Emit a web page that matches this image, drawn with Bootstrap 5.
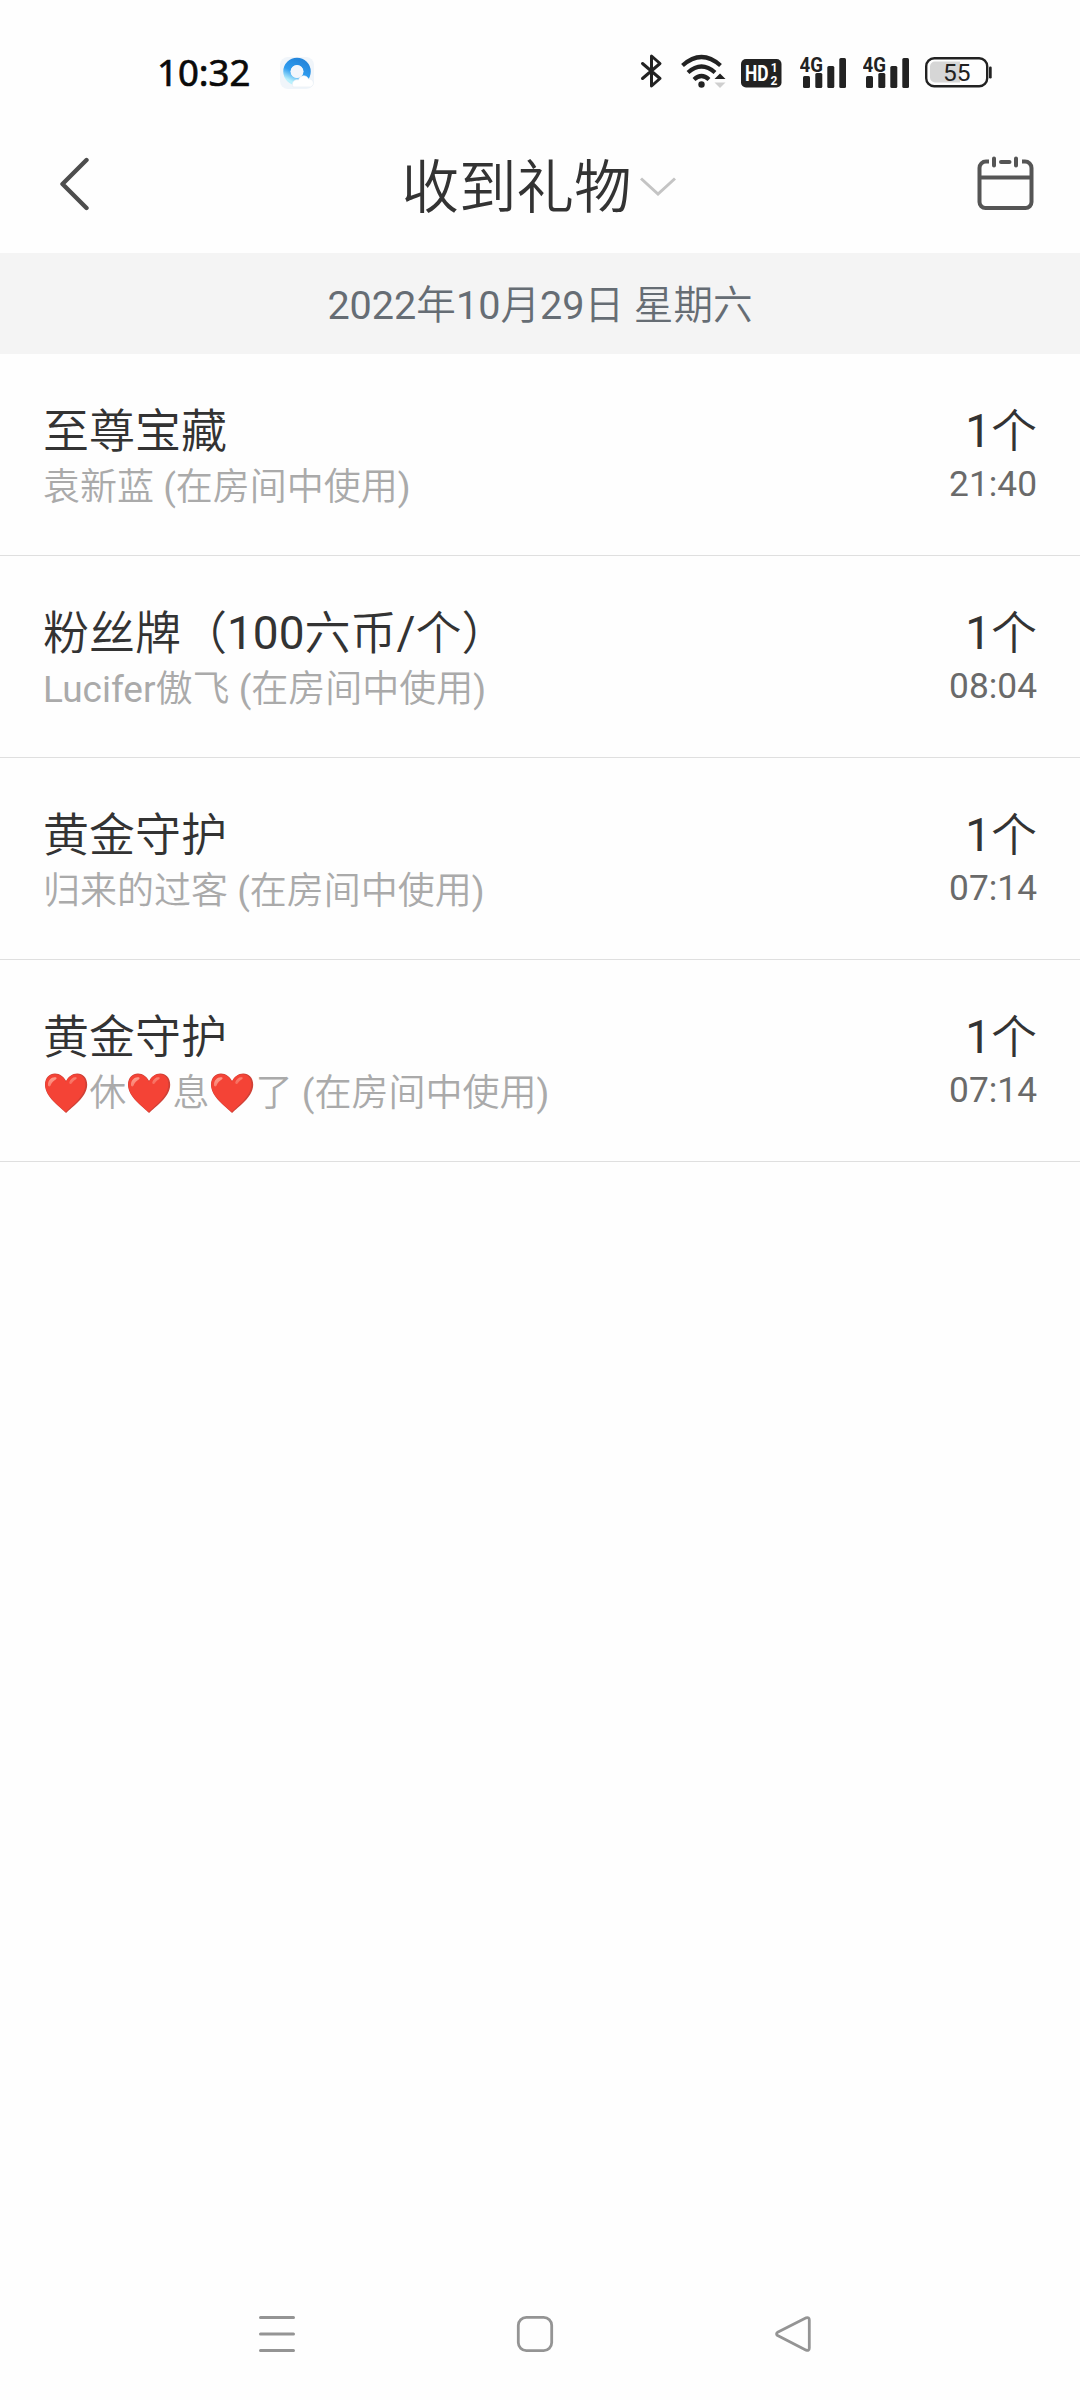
<!DOCTYPE html>
<html lang="zh-CN">
<head>
<meta charset="utf-8">
<meta name="viewport" content="width=device-width, initial-scale=1">
<title>收到礼物</title>
<link href="https://cdn.jsdelivr.net/npm/bootstrap@5.3.0/dist/css/bootstrap.min.css" rel="stylesheet">
<style>
  body{font-family:Roboto,"Noto Sans CJK SC DemiLight","Noto Sans CJK SC",sans-serif;color:#333;background:#fefefe}
  svg{display:block;flex:none}
  .phone{width:1080px;height:2400px;background:#fefefe}
  .status-bar{height:118px;padding:40px 87px 0 157px}
  .status-bar>div{height:64px}
  .status-icons{padding-bottom:2px}
  .clock{font:400 36.500px/64px "Noto Sans",sans-serif;color:#0a0a0a;-webkit-text-stroke:.7px #0a0a0a;width:122px;white-space:nowrap}
  .title-bar{height:135px;padding:0 45px 0 58px}
  .title-bar>svg{margin-bottom:2px}
  .page-title{font-size:57.500px;line-height:70px;font-weight:400;margin:6px 0 0}
  .date-band{height:101px;background:#f4f4f4;color:#666d74;font-size:39.600px;line-height:106px}
  .list-group>.gift{height:202px;padding:50px 43px 0;border:0;border-bottom:1px solid #dfdfdf;border-radius:0;background:#fefefe;color:#333}
  .gift-name{font-size:46px;line-height:54px;white-space:nowrap}
  .gift-from{font-size:37px;line-height:44px;margin-top:8px;color:#aaa;white-space:nowrap}
  .gift-time{font-size:35.300px;line-height:44px;margin-top:4px;color:#6a6a6a}
  .heart{display:inline-block;width:46.2px;height:40px;vertical-align:-7px}
  .nav-keys{height:132px;padding:0 267px 0 257px}
</style>
<script src="https://cdn.jsdelivr.net/npm/bootstrap@5.3.0/dist/js/bootstrap.bundle.min.js"></script>
</head>
<body>
<svg width="0" height="0" class="position-absolute" aria-hidden="true">
  <defs>
    <linearGradient id="heartShine" x1="0" y1="0" x2="1" y2="1"><stop offset="0" stop-color="#ffa494"/><stop offset="1" stop-color="#f4584a"/></linearGradient>
    <linearGradient id="ring" x1=".7" y1="0" x2=".25" y2="1"><stop offset="0" stop-color="#2587dc"/><stop offset=".55" stop-color="#2f9df0"/><stop offset="1" stop-color="#b9f0fc"/></linearGradient>
    <symbol id="heart" viewBox="0 0 46.4 40">
      <path d="M23.2 43C18 37 2 26 2 12.500 2 5 6.500 .5 12 .5c5 0 9 3.500 11.200 8C25.400 4 29.400 .5 34.400 .5 40 .5 44.400 5 44.400 12.500c0 13.500-16 24.500-21.200 30.500z" transform="scale(1 .93)" fill="#cf4137"/>
      <path d="M22.800 42C18 36.500 2.400 25.500 2.400 12.500 2.400 5.500 6.700 1.200 12 1.200c5 0 9 3.400 11 8.300C25 4.600 28.800 1.200 33.600 1.200c5.200 0 9 4 9 11C42.600 25 28 36 22.800 42z" transform="scale(1 .93)" fill="#f44336"/>
      <path d="M5 12C5 7 8.500 3.800 12.500 4.200c1.500.2 1.500 1.500.3 2.200C9.500 8.200 8.500 10.500 7.500 12.700c-.8 1.300-2.500.8-2.500-.7zM26.500 9c1-2.800 3.500-5 6.500-4.800 1.200.2 1 1.400.2 2-1.700 1-3.200 2.300-4.500 4.300-.9 1.200-2.700.3-2.200-1.500z" fill="url(#heartShine)"/>
    </symbol>
    <symbol id="signal" viewBox="0 0 47 36">
      <text x="-.5" y="18.500" font-family="Roboto" font-weight="700" font-size="21" textLength="23.500" lengthAdjust="spacingAndGlyphs" fill="#222">4G</text>
      <g fill="#222"><rect x="3" y="23" width="7" height="12" rx="1.500"/><rect x="15.300" y="20" width="7" height="15" rx="1.500"/><rect x="27.300" y="13" width="7" height="22" rx="1.500"/><rect x="39.300" y="5" width="6.700" height="30" rx="1.500"/></g>
    </symbol>
  </defs>
</svg>
<main class="phone d-flex flex-column overflow-hidden">
  <header class="status-bar d-flex justify-content-between">
    <div class="d-flex align-items-center">
      <div class="clock">10:32</div>
      <svg width="36" height="36" viewBox="0 0 36 36">
        <rect x="1" y="3" width="34" height="32" rx="8" fill="#f0f5fa"/>
        <circle cx="18" cy="17.500" r="10" fill="none" stroke="url(#ring)" stroke-width="7.500"/>
        <circle cx="18" cy="17.500" r="6.500" fill="#f3f6fb"/>
        <path d="M14 33c-2-5 2-8 5.500-7 1-5 8-6 10-1 5-.5 7 6 2 8z" fill="#fff" stroke="#e5edf4" stroke-width=".6"/>
      </svg>
    </div>
    <div class="status-icons d-flex align-items-center">
      <svg width="24" height="36" viewBox="0 0 24 36"><path d="M2.500 10.500 20 25.500 11.500 33V3L20 10.500 2.500 25.500" fill="none" stroke="#222" stroke-width="3" stroke-linejoin="round" stroke-linecap="round"/></svg>
      <svg width="46" height="36" viewBox="0 0 46 36" style="margin-left:17px"><g fill="none" stroke="#222" stroke-width="4.200"><path d="M1.500 12.500Q20.500-4.500 39.500 12.500"/><path d="M7 19.500Q20.500 7.500 34 19.500"/><path d="M13 26.500Q20.500 19.500 28 26.500"/></g><circle cx="20.500" cy="31.500" r="3.200" fill="#222"/><path d="M33.500 26 39 20.500 44.500 26z" fill="#222"/><path d="M33.500 29.500h11L39 35z" fill="#cfcfcf"/></svg>
      <svg width="41" height="36" viewBox="0 0 41 36" style="margin-left:14px"><rect x="0" y="6" width="40.500" height="28.500" rx="5" fill="#222"/><g fill="#fff" font-family="Roboto" font-weight="700"><text x="4" y="28" font-size="22" textLength="23.500" lengthAdjust="spacingAndGlyphs">HD</text><text x="29.800" y="19" font-size="12">1</text><text x="29.500" y="31.500" font-size="12">2</text></g></svg>
      <svg width="47" height="36" style="margin-left:18px"><use href="#signal"/></svg>
      <svg width="47" height="36" style="margin-left:16px"><use href="#signal"/></svg>
      <svg width="68" height="36" viewBox="0 0 68 36" style="margin-left:15px"><rect x="1.200" y="5.200" width="61" height="28" rx="8" fill="none" stroke="#222" stroke-width="2.400"/><path d="M10 8.500h25v21H10a5 5 0 0 1-5-5v-11a5 5 0 0 1 5-5z" fill="#d6d6d6"/><rect x="64" y="13.500" width="2.700" height="12" rx="1.200" fill="#222"/><text x="31.800" y="28" text-anchor="middle" font-family="Roboto" font-size="24.500" fill="#222">55</text></svg>
    </div>
  </header>
  <nav class="title-bar d-flex align-items-center justify-content-between">
    <svg width="34" height="56" viewBox="0 0 34 56" role="img" aria-label="返回"><path d="M28.500 4 4.500 28 28.500 52" transform="translate(0 -1)" fill="none" stroke="#4d4d4d" stroke-width="4.400" stroke-linecap="round" stroke-linejoin="round"/></svg>
    <div class="d-flex align-items-center ps-2">
      <h1 class="page-title">收到礼物</h1>
      <svg width="36" height="20" viewBox="0 0 36 20" style="margin-left:8px"><path d="M1 2.500 18 18 35 2.500" fill="none" stroke="#c4c4c4" stroke-width="3"/></svg>
    </div>
    <svg width="58" height="58" viewBox="0 0 58 58" role="img" aria-label="日历"><g transform="translate(0 -1)" fill="none" stroke="#555" stroke-width="4"><path d="M12 6.500H9a6.500 6.500 0 0 0-6.500 6.500v34a6 6 0 0 0 6 6h40a6 6 0 0 0 6-6V13A6.500 6.500 0 0 0 48 6.500h-3M2.500 22.500h52"/><path d="M17 3.500v7M39 3.500v7M24 7h8.500" stroke-linecap="round"/></g></svg>
  </nav>
  <div class="date-band text-center">2022年10月29日 星期六</div>
  <div class="list-group rounded-0">
    <div class="list-group-item gift d-flex justify-content-between">
      <div><div class="gift-name">至尊宝藏</div><div class="gift-from">袁新蓝 (在房间中使用)</div></div>
      <div class="text-end"><div class="gift-name">1个</div><div class="gift-time">21:40</div></div>
    </div>
    <div class="list-group-item gift d-flex justify-content-between">
      <div><div class="gift-name">粉丝牌（100六币/个）</div><div class="gift-from">Lucifer傲飞 (在房间中使用)</div></div>
      <div class="text-end"><div class="gift-name">1个</div><div class="gift-time">08:04</div></div>
    </div>
    <div class="list-group-item gift d-flex justify-content-between">
      <div><div class="gift-name">黄金守护</div><div class="gift-from">归来的过客 (在房间中使用)</div></div>
      <div class="text-end"><div class="gift-name">1个</div><div class="gift-time">07:14</div></div>
    </div>
    <div class="list-group-item gift d-flex justify-content-between">
      <div><div class="gift-name">黄金守护</div><div class="gift-from"><svg class="heart"><use href="#heart"/></svg>休<svg class="heart"><use href="#heart"/></svg>息<svg class="heart"><use href="#heart"/></svg>了 (在房间中使用)</div></div>
      <div class="text-end"><div class="gift-name">1个</div><div class="gift-time">07:14</div></div>
    </div>
  </div>
  <footer class="nav-keys mt-auto d-flex align-items-center justify-content-between">
    <svg width="40" height="40" viewBox="0 0 40 40"><path d="M3.500 3.500h33M3.500 20h33M3.500 36.500h33" stroke="#949494" stroke-width="3" stroke-linecap="round"/></svg>
    <svg width="40" height="40" viewBox="0 0 40 40"><rect x="3.300" y="3.400" width="33.400" height="33.200" rx="8" fill="none" stroke="#949494" stroke-width="2.800"/></svg>
    <svg width="40" height="40" viewBox="0 0 40 40"><path d="M33.200 3.800 4.600 18.200Q2.500 20 4.600 21.600L33.200 36.200Q36.200 37 36.300 34V6Q36.200 3 33.200 3.800z" fill="none" stroke="#949494" stroke-width="2.800" stroke-linejoin="round"/></svg>
  </footer>
</main>
</body>
</html>
